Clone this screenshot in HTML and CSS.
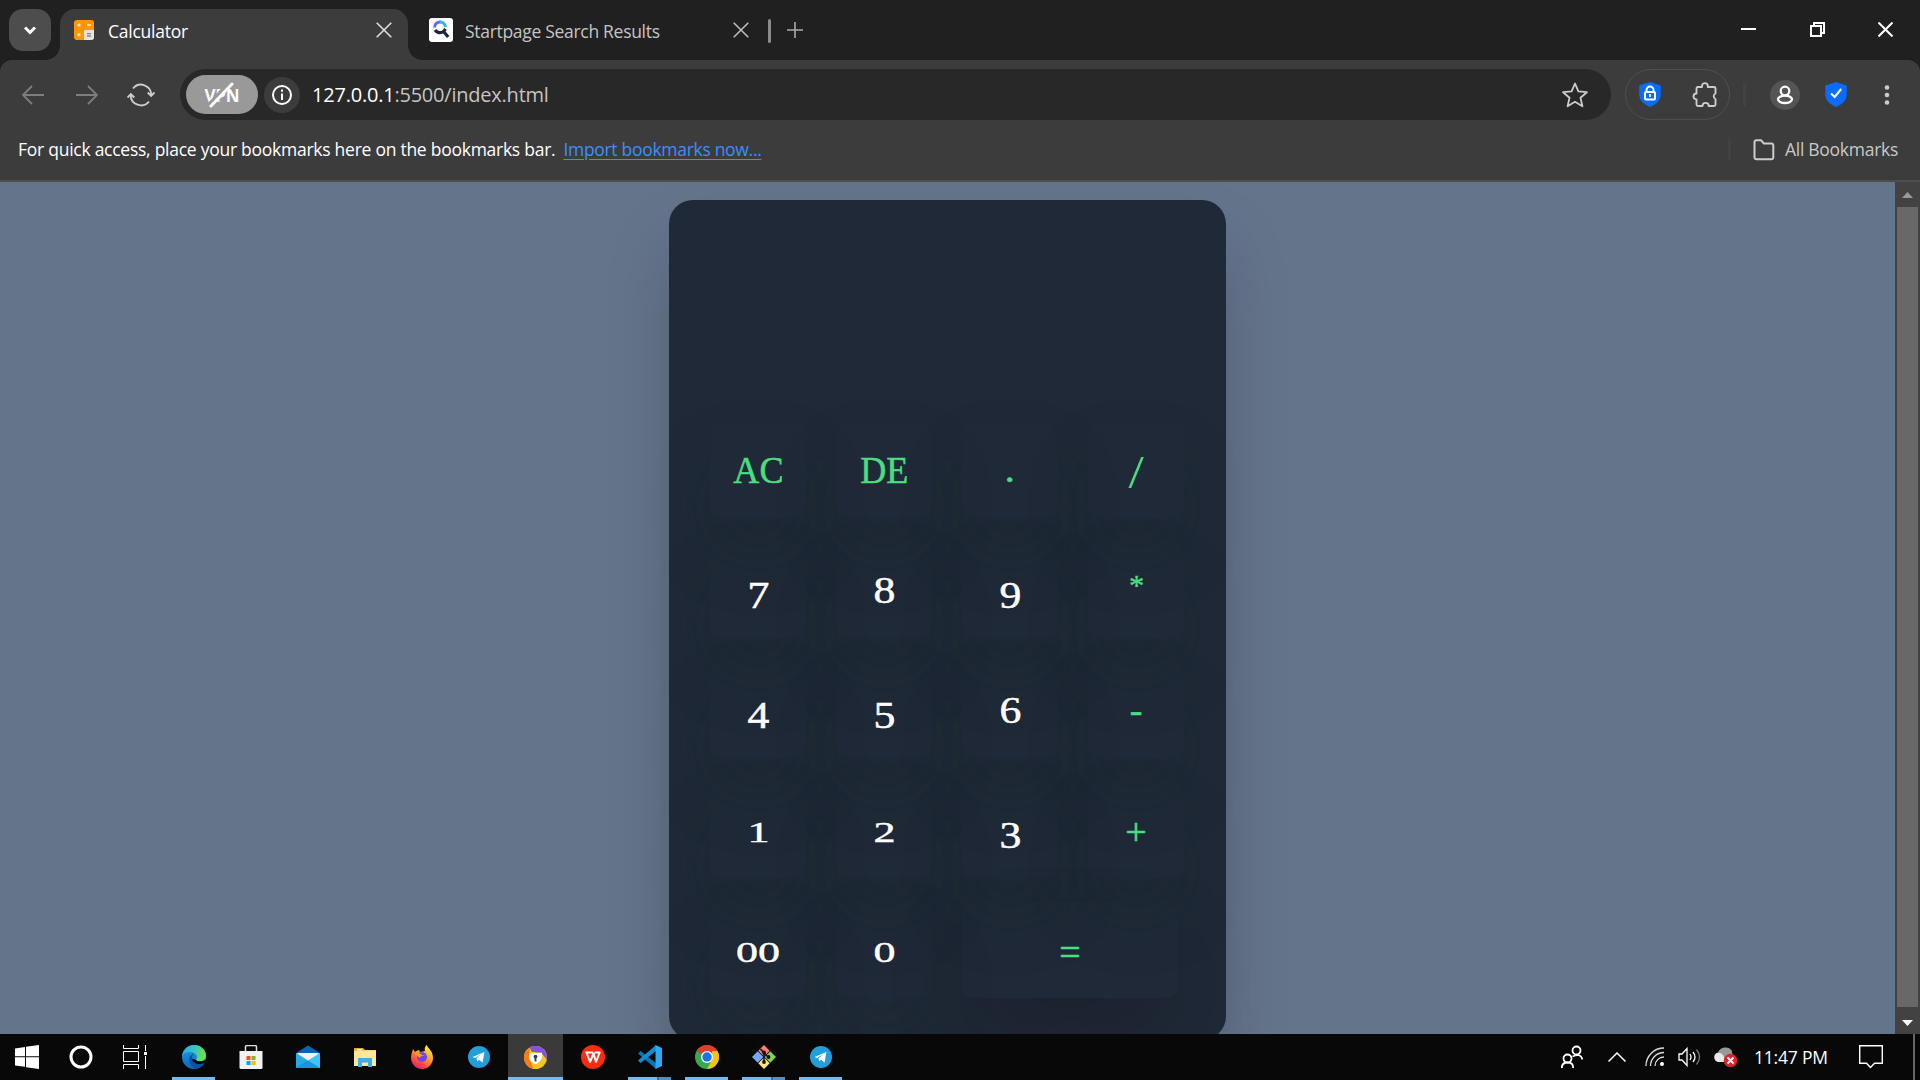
FILE: index.html
```
<!DOCTYPE html>
<html lang="en">
<head>
<meta charset="utf-8">
<title>Calculator</title>
<link rel="stylesheet" href="styles.css">
</head>
<body>
<header class="tabs">
  <button class="tab-menu"><svg width="42" height="42" viewBox="0 0 42 42"><path d="M16 18.500l5 5 5-5" class="s3"/></svg></button>
  <div class="tab active">
    <svg class="fav-calc" width="20" height="20" viewBox="0 0 20 20"><rect width="20" height="20" rx="3" fill="#ff9800"/><path d="M10 10h10v7a3 3 0 0 1-3 3h-7z" fill="#e4e4e4"/><path d="M10 0v10H0" fill="none" stroke="#e88800" stroke-width=".7"/><path d="M5 3.500v3M3.500 5h3M13 5h4M3.700 13.500l2.600 2.600M6.300 13.500l-2.600 2.600" stroke="#fff0d0" stroke-width="1.400"/><path d="M13 13.700h4M13 16h4" stroke="#888" stroke-width="1.300"/></svg>
    <span class="tab-title t-calc">Calculator</span>
    <svg class="close" width="16" height="16" viewBox="0 0 16 16"><path d="M.7.700l14.600 14.600M15.300.700L.7 15.300" stroke="#ddd" stroke-width="1.600"/></svg>
  </div>
  <div class="tab idle">
    <svg width="24" height="24" viewBox="0 0 24 24"><rect width="24" height="24" rx="3" fill="#fff"/><path d="M5.500 9.500A5.500 5.500 0 0 1 12 4" fill="none" stroke="#5a6cff" stroke-width="3"/><path d="M11 4a5.500 5.500 0 0 1 5.500 5" fill="none" stroke="#28b8dc" stroke-width="3"/><path d="M6 12a6 6 0 0 0 8.500 1.500l4.700 5.500M14.500 13.500l2-2.500" fill="none" stroke="#1c2445" stroke-width="3.200"/></svg>
    <span class="tab-title t-start">Startpage Search Results</span>
    <svg class="close" width="16" height="16" viewBox="0 0 16 16"><path d="M.7.700l14.600 14.600M15.300.700L.7 15.300" stroke="#bbb" stroke-width="1.600"/></svg>
  </div>
  <i class="tab-sep"></i>
  <svg class="plus" width="16" height="16" viewBox="0 0 16 16"><path d="M8 0v16M0 8h16" stroke="#aaa" stroke-width="1.600"/></svg>
  <div class="window-buttons">
    <svg width="15" height="15" viewBox="0 0 15 15"><path d="M0 7h15" stroke="#fff" stroke-width="2"/></svg>
    <svg width="15" height="15" viewBox="0 0 15 15"><path d="M1 4h10v10H1zM4 4V1h10v10h-3" fill="none" stroke="#fff" stroke-width="2"/></svg>
    <svg width="15" height="15" viewBox="0 0 15 15"><path d="M.5.500l14 14M14.500.500l-14 14" stroke="#fff" stroke-width="2"/></svg>
  </div>
</header>
<section class="chrome">
<div class="toolbar">
  <svg class="nav-icon" width="22" height="22" viewBox="0 0 22 22"><path d="M22 11H1M10 2L1 11l9 9" class="dim"/></svg>
  <svg class="nav-icon" width="22" height="22" viewBox="0 0 22 22"><path d="M0 11h21M12 2l9 9-9 9" class="dim"/></svg>
  <svg class="reload" width="28" height="26" viewBox="0 0 28 26"><path d="M6 6.500a10.300 10.300 0 0 1 18.300 6.500M22 19.500a10.300 10.300 0 0 1-18.300-6.500M.5 15.500l3.300-3.500 3.500 3.500M20.700 10.500l3.500 3.500 3.300-3.500" fill="none" stroke="#ccc" stroke-width="1.900"/></svg>
  <div class="address">
    <span class="vpn">VPN<svg width="26" height="26" viewBox="0 0 26 26"><path d="M2.500 22.500L22 1.500" stroke="#999" stroke-width="6"/><path d="M3 24L24 2" stroke="#fff" stroke-width="3" stroke-linecap="round"/></svg></span>
    <span class="info"><svg width="22" height="22" viewBox="0 0 22 22"><circle cx="11" cy="11" r="9" fill="none" stroke="#fff" stroke-width="2"/><path d="M11 9.500V16M11 5.500v2.300" stroke="#fff" stroke-width="2"/></svg></span>
    <span class="url"><b>127.0.0.1</b>:5500/index.html</span>
    <svg class="star" width="26" height="26" viewBox="0 0 26 26"><path d="M13 1.500l3.400 7.900 8.500.8-6.400 5.600 1.900 8.500L13 19.800l-7.400 4.500 1.900-8.500-6.400-5.600 8.500-.8z" fill="none" stroke="#ccc" stroke-width="1.800" stroke-linejoin="round"/></svg>
  </div>
  <div class="extensions">
    <svg width="22" height="25" viewBox="0 0 22 25"><path d="M11 0l10.700 3.500V12c0 6-4 10-10.700 13C4.300 22 .3 18 .3 12V3.500z" fill="#0a6cff"/><rect x="6" y="10" width="10" height="7.500" rx="1" fill="none" stroke="#fff" stroke-width="2"/><path d="M7.500 10V8a3.500 3.500 0 0 1 7 0v2M11 12v3" fill="none" stroke="#fff" stroke-width="1.900"/></svg>
    <svg width="26" height="26" viewBox="0 0 26 26"><path d="M5.500 5H10V4a2.900 2.900 0 0 1 5.800 0v1H22a1.500 1.500 0 0 1 1.500 1.500v5a3 3 0 0 0 0 5.500v5.500A1.500 1.500 0 0 1 22 24h-5.300a3.100 3.100 0 0 0-6.200 0H6A1.500 1.500 0 0 1 4.500 22.500v-5a3 3 0 0 1 0-6V6.500A1.500 1.500 0 0 1 5.500 5z" fill="none" stroke="#ccc" stroke-width="1.900" stroke-linejoin="round"/></svg>
  </div>
  <i class="sep"></i>
  <span class="avatar"><svg width="18" height="20" viewBox="0 0 18 20"><circle cx="9" cy="6" r="4.300" class="s2"/><ellipse cx="9" cy="14.300" rx="7" ry="3.700" class="s2"/></svg></span>
  <svg class="guard" width="22" height="25" viewBox="0 0 22 25"><path d="M11 0l10.700 3.500V12c0 6-4 10-10.700 13C4.300 22 .3 18 .3 12V3.500z" fill="#0a6cff"/><path d="M6 11.500l3.700 3.500 6.500-8" fill="none" stroke="#fff" stroke-width="2"/></svg>
  <svg class="dots" width="6" height="20" viewBox="0 0 6 20"><g fill="#ccc"><circle cx="3" cy="2.500" r="2.300"/><circle cx="3" cy="10" r="2.300"/><circle cx="3" cy="17.500" r="2.300"/></g></svg>
</div>
<div class="bookmarks">
  <span class="hint">For quick access, place your bookmarks here on the bookmarks bar.</span>
  <a class="import">Import bookmarks now...</a>
  <i class="sep bm-sep"></i>
  <svg width="22" height="22" viewBox="0 0 22 22"><path d="M1.500 3A1.800 1.800 0 0 1 3.300 1.200H8l2.800 3.300h7.700A1.800 1.800 0 0 1 20.300 6.300v12.200a1.800 1.800 0 0 1-1.800 1.800H3.300a1.800 1.800 0 0 1-1.800-1.800z" fill="none" stroke="#ccc" stroke-width="2"/></svg>
  <span class="all">All Bookmarks</span>
</div>
</section>
<main class="viewport">
  <div class="page">
    <div class="calculator">
      <div class="keys">
        <button class="key op"><span class="cap">AC</span></button><button class="key op"><span class="cap">DE</span></button><button class="key op"><span class="point">.</span></button><button class="key op"><span class="slash">/</span></button>
        <button class="key"><span class="low">7</span></button><button class="key"><span class="tall">8</span></button><button class="key"><span class="low">9</span></button><button class="key op"><span class="times">*</span></button>
        <button class="key"><span class="low">4</span></button><button class="key"><span class="low">5</span></button><button class="key"><span class="tall">6</span></button><button class="key op"><span class="minus">-</span></button>
        <button class="key"><span class="short">1</span></button><button class="key"><span class="short">2</span></button><button class="key"><span class="low">3</span></button><button class="key op"><span class="sym">+</span></button>
        <button class="key"><span class="short">00</span></button><button class="key"><span class="short">0</span></button><button class="key op equals"><span class="sym">=</span></button>
      </div>
    </div>
  </div>
  <div class="scrollbar">
    <svg width="25" height="25" viewBox="0 0 25 25"><path d="M7 16h11l-5.500-6z" fill="#999"/></svg>
    <div class="thumb"></div>
    <svg width="25" height="27" viewBox="0 0 25 27"><path d="M7 13h11l-5.500 6z" fill="#fff"/></svg>
  </div>
</main>
<footer class="taskbar">
  <div class="app start"><svg width="24" height="24" viewBox="0 0 24 24"><path d="M0 3.500l10-1.500v9.300H0zM11 1.800L24 0v11.300H11zM0 12.300h10v9.400L0 20.500zM11 12.300h13V24l-13-1.800z" fill="#fff"/></svg></div>
  <div class="app search"><svg width="24" height="24" viewBox="0 0 24 24"><circle cx="12" cy="12" r="10" fill="none" stroke="#fff" stroke-width="3"/></svg></div>
  <div class="app view"><svg width="24" height="24" viewBox="0 0 24 24"><path d="M.5 0v3.500h15V0M.5 6.500h15v10H.5zM.5 24v-4.500h15V24M22.500 0v6M22.500 11v13" fill="none" stroke="#fff"/><path d="M21 7h3v3h-3z" fill="#fff"/></svg></div>
  <div class="app running"><svg width="24" height="24" viewBox="0 0 24 24"><defs><linearGradient id="eg" x1="0" y1="0" x2="1" y2=".3"><stop offset="0" stop-color="#2ba8e8"/><stop offset=".5" stop-color="#35c1c8"/><stop offset="1" stop-color="#6be04c"/></linearGradient><linearGradient id="eb" x1="0" y1="0" x2="0" y2="1"><stop offset="0" stop-color="#1ba0e5"/><stop offset="1" stop-color="#0b66c4"/></linearGradient></defs><circle cx="12" cy="12" r="12" fill="url(#eb)"/><path d="M0 11C1 4.500 6 0 12 0c7 0 12 5 12 10.500 0 4-3 6-6.500 6-2.500 0-3.800-.8-3.500-1.700 1.600-1.800 1.200-5.300-2-6.800C8 6 2 7 0 11z" fill="url(#eg)"/><path d="M12 8c-5 2-6 8-3 12 2 3 5 4 7 3.300 3-.8 5-2.800 6.500-5-5 2-12 0-12.500-5 0-2 .8-3.800 2-5.300z" fill="#10509c"/><path d="M10 13.500c.5 5 7 7 12.500 4.500 1.500-1 1.200-2 .5-3-2 1.500-8 2-9 0z" fill="#080808"/></svg></div>
  <div class="app"><svg width="24" height="24" viewBox="0 0 24 24"><path d="M6.500 7V2a1.500 1.500 0 0 1 1.500-1.500h8A1.500 1.500 0 0 1 17.500 2v5" fill="none" stroke="#ddd" stroke-width="1.500"/><path d="M.5 6h23v16.500a1.500 1.500 0 0 1-1.500 1.500H2a1.500 1.500 0 0 1-1.500-1.500z" fill="#f1f1f1"/><path d="M7.500 11h4v4h-4z" fill="#f25022"/><path d="M12.500 11h4v4h-4z" fill="#7fba00"/><path d="M7.500 16h4v4h-4z" fill="#00a4ef"/><path d="M12.500 16h4v4h-4z" fill="#ffb900"/></svg></div>
  <div class="app"><svg width="24" height="24" viewBox="0 0 24 24"><path d="M0 8l12-7.500L24 8v8H0z" fill="#0a63b8"/><path d="M1.500 8h21v8h-21z" fill="#f2f2f2"/><path d="M0 8l12 7.500L0 23z" fill="#28a8ea"/><path d="M24 8L0 23h24z" fill="#3cc4f8"/><path d="M12 15.500L24 23H0z" fill="#1c94dc"/></svg></div>
  <div class="app"><svg width="24" height="24" viewBox="0 0 24 24"><path d="M1 3h8l3 2h11v16H1z" fill="#fbd66d"/><path d="M1 6h22v15H1z" fill="#ffe794"/><path d="M1 3h9l2 2.500H1z" fill="#e8a92c"/><path d="M4 4h5v1.500H4z" fill="#fff"/><path d="M5 22v-9h14v9h-4v-4.500H9V22z" fill="#38b0ea"/></svg></div>
  <div class="app"><svg width="24" height="24" viewBox="0 0 24 24"><defs><linearGradient id="ff" x1=".8" y1="0" x2=".2" y2="1"><stop offset="0" stop-color="#fff44f"/><stop offset=".45" stop-color="#ff9a23"/><stop offset=".8" stop-color="#ff3750"/><stop offset="1" stop-color="#e31587"/></linearGradient></defs><path d="M3 4l2 3c1-1 3-2 4-2l1 2 5-1c-1-2 0-5 2-6 0 3 6 5 6 13a11 11 0 0 1-22 0c0-3 1-6 2-9z" fill="url(#ff)"/><circle cx="12" cy="12" r="5" fill="#7542e5"/><path d="M5 9c3-1 5-1 7 1l3 0c-2 1-5 1-5 3" fill="#ff9a23"/></svg></div>
  <div class="app"><svg width="22" height="22" viewBox="0 0 22 22"><circle cx="11" cy="11" r="11" fill="#229ed9"/><path d="M4.500 11L16.500 6l-2 10.500-3.700-2.700-1.600 1.700-.7-3.300 4.800-4.200-6 3.900z" fill="#fff"/></svg></div>
  <div class="app current"><svg width="23" height="23" viewBox="0 0 24 24"><circle cx="12" cy="12" r="12" fill="#f5c520"/><path d="M6 1.600A12 12 0 0 1 23.700 14L18 7 8 6z" fill="#8150f0"/><path d="M6 1.600A12 12 0 0 0 10 23.800L5 12z" fill="#ff7a18"/><path d="M6 7.500c4 0 8 0 12.500-.5 1.500 5-1 10-6.500 12-5-2-8-6-6-11.500z" fill="#fff"/><circle cx="12" cy="11" r="2" fill="#333b52"/><path d="M11 12h2v4h-2z" fill="#333b52"/></svg></div>
  <div class="app"><svg width="24" height="24" viewBox="0 0 24 24"><circle cx="12" cy="12" r="12" fill="#fb2c0d"/><path d="M4.500 7.500H12M5.500 7.500L9 17l3.500-8.500L15 17l3.700-9.500h-5.200" fill="none" stroke="#fff" stroke-width="2" stroke-linejoin="round"/></svg></div>
  <div class="app stacked"><svg width="24" height="24" viewBox="0 0 24 24"><path d="M2.500 6L18 18v6L0 8.500z" fill="#0872b9"/><path d="M2.500 18L18 6V0L0 15.500z" fill="#148bd4"/><path d="M17.500 0L24 3v18l-6.500 3z" fill="#2aa9f4"/></svg></div>
  <div class="app running"><svg width="24" height="24" viewBox="0 0 24 24"><circle cx="12" cy="12" r="12" fill="#34a853"/><path d="M12 12L1.600 6A12 12 0 0 1 22.400 6z" fill="#e33b2e"/><path d="M22.400 6A12 12 0 0 1 12 24l5-9V6z" fill="#fbc116"/><circle cx="12" cy="12" r="6" fill="#fff"/><circle cx="12" cy="12" r="4.700" fill="#1a73e8"/></svg></div>
  <div class="app stacked"><svg width="24" height="24" viewBox="0 0 24 24"><path d="M12 0l5.700 5.700-5.700 5.700-5.700-5.700z" fill="#ff7b7b"/><path d="M18.300 6.300L24 12l-5.700 5.700-5.700-5.700z" fill="#80d060"/><path d="M12 12.600l5.700 5.700L12 24l-5.700-5.700z" fill="#ffe57c"/><path d="M5.700 6.300l5.700 5.700-5.700 5.700L0 12z" fill="#78a9f5"/><path d="M8.500 4l3.500 4v9M12 8l4 4" fill="none" stroke="#151515" stroke-width="1.600"/><g fill="#151515"><circle cx="12" cy="7.500" r="1.900"/><circle cx="16.500" cy="12" r="1.900"/><circle cx="12" cy="17" r="1.900"/></g></svg></div>
  <div class="app running"><svg width="22" height="22" viewBox="0 0 22 22"><circle cx="11" cy="11" r="11" fill="#229ed9"/><path d="M4.500 11L16.500 6l-2 10.500-3.700-2.700-1.600 1.700-.7-3.300 4.800-4.200-6 3.900z" fill="#fff"/></svg></div>
  <div class="tray">
    <svg width="22" height="24" viewBox="0 0 22 24" class="people"><circle cx="15.500" cy="5.500" r="4"/><path d="M11.500 11.500q8-4 10 3"/><circle cx="6.500" cy="13.500" r="4"/><path d="M.8 23q0-5.500 5.700-5.500t5.700 5.500"/></svg>
    <svg width="18" height="10" viewBox="0 0 18 10" class="chev"><path d="M.5 9.500L9 1l8.500 8.500" fill="none" stroke="#fff" stroke-width="1.500"/></svg>
    <svg width="20" height="20" viewBox="0 0 20 20" class="wifi"><g fill="none" stroke="#ddd" stroke-width="1.300"><path d="M1 19A18 18 0 0 1 19 1"/><path d="M5.500 19A13.500 13.500 0 0 1 19 5.500"/><path d="M10 19a9 9 0 0 1 9-9"/></g><circle cx="17" cy="17" r="2" fill="#fff"/></svg>
    <svg width="23" height="20" viewBox="0 0 23 20" class="sound"><path d="M1 7h3l5-5.500v17L4 13H1zM12 7q2 3 0 6M15 5q4 5 0 10" fill="none" stroke="#fff" stroke-width="1.300"/><path d="M18.500 2.500q6 7.500 0 15" fill="none" stroke="#777" stroke-width="1.300"/></svg>
    <svg width="26" height="22" viewBox="0 0 26 22" class="cloud"><path d="M5 16a5 5 0 0 1 0-9.500A8 8 0 0 1 19 5l1 10z" fill="#999"/><path d="M5 16a4.800 4.800 0 0 1-1-9q6-2 9 9z" fill="#e8e8e8"/><circle cx="17.500" cy="14.500" r="6.800" fill="#d9252c"/><path d="M14.500 11.500l6 6M20.500 11.500l-6 6" stroke="#fff" stroke-width="1.800"/></svg>
    <span class="clock">11:47 PM</span>
    <svg width="24" height="24" viewBox="0 0 24 24" class="note"><path d="M.7.700h22.600v17.600H15.500L11.500 22.500 7.500 18.300H.7z" fill="none" stroke="#fff" stroke-width="1.400"/></svg>
    <i class="desktop"></i>
  </div>
</footer>
</body>
</html>
```
FILE: styles.css
```
* { box-sizing: border-box; }
body { margin: 0; width: 1920px; height: 1080px; overflow: hidden; display: flex; flex-direction: column; background: #202020; font-family: "Open Sans", "Noto Sans", sans-serif; font-size: 17.5px; color: #fff; }
svg { display: block; flex: none; }
button { border: 0; padding: 0; color: inherit; font: inherit; }
.s3 { fill: none; stroke: #fff; stroke-width: 3; }
.s2 { fill: none; stroke: #fff; stroke-width: 2.3; }
.dim { fill: none; stroke: #7d7d7d; stroke-width: 1.8; }

.tabs { height: 60px; flex: none; display: flex; align-items: flex-start; padding: 9px 27px 0 9px; }
.tab-menu { width: 42px; height: 42px; border-radius: 14px; background: #4d4d4d; }
.tab { display: flex; align-items: center; white-space: nowrap; }
.tab.active { position: relative; width: 348px; height: 51px; margin-left: 9px; padding: 0 16px 9px 14px; background: #3c3c3c; border-radius: 15px 15px 0 0; }
.tab.active::before, .tab.active::after { content: ""; position: absolute; bottom: 0; width: 14px; height: 14px; }
.tab.active::before { left: -14px; background: radial-gradient(circle at 0 0, transparent 13.5px, #3c3c3c 14px); }
.tab.active::after { right: -14px; background: radial-gradient(circle at 100% 0, transparent 13.5px, #3c3c3c 14px); }
.tab-title { margin-left: 14px; line-height: 24px; padding-top: 1px; }
.t-calc { letter-spacing: -.25px; }
.t-start { margin-left: 12px; color: #c4c4c4; letter-spacing: -.3px; }
.close { margin-left: auto; }
.tab.idle { width: 320px; height: 42px; margin-left: 21px; }
.tab-sep { width: 3px; height: 24px; margin: 10px 0 0 19px; border-radius: 2px; background: #8c8c8c; }
.plus { margin: 13px 0 0 16px; }
.window-buttons { display: flex; gap: 53.5px; margin: 13px 0 0 auto; }

.chrome { height: 122px; flex: none; background: #3c3c3c; border-radius: 12px 12px 0 0; border-bottom: 2px solid #4e4e4e; }
.toolbar { height: 69px; display: flex; align-items: center; padding: 0 30px 0 22px; }
.nav-icon { margin-right: 32px; }
.reload { margin: 0 25px 0 -3px; }
.address { width: 1431px; height: 51px; border-radius: 26px; background: #282828; display: flex; align-items: center; padding: 0 23px 0 6px; }
.vpn { position: relative; width: 72px; height: 39px; border-radius: 20px; background: #999; display: flex; align-items: center; justify-content: center; font-size: 17px; font-weight: 700; letter-spacing: -.2px; padding-top: 2px; }
.vpn svg { position: absolute; left: 22px; top: 7px; }
.info { width: 36px; height: 36px; margin-left: 6px; border-radius: 50%; background: #3c3c3c; display: grid; place-items: center; }
.url { margin-left: 12px; font-size: 20px; letter-spacing: -.22px; color: #c4c4c4; white-space: nowrap; }
.url b { color: #fff; font-weight: 400; }
.star { margin-left: auto; }
.extensions { width: 105px; height: 51px; margin-left: 14px; border: 1.5px solid #505050; border-radius: 26px; display: flex; align-items: center; justify-content: space-between; padding: 0 11px 0 13px; }
.sep { width: 3px; height: 23px; background: #424242; margin-left: 13px; }
.avatar { width: 30px; height: 30px; margin-left: 24px; border-radius: 50%; background: #555; display: grid; place-items: center; }
.guard { margin-left: 25px; }
.dots { margin-left: auto; }
.bookmarks { height: 43px; display: flex; align-items: center; padding: 0 22px 4px 18px; white-space: nowrap; }
.hint { letter-spacing: -.26px; }
.import { margin-left: 8px; color: #3f8cff; letter-spacing: -.3px; text-decoration: underline; text-underline-offset: 3px; }
.bm-sep { margin: 0 22px 0 auto; }
.bookmarks svg { margin-top: 2px; }
.all { margin-left: 10px; color: #c8c8c8; letter-spacing: -.28px; }

.viewport { height: 852px; flex: none; display: flex; background: #64748b; }
.page { width: 1895px; height: 852px; overflow: hidden; padding: 18px 0 0 669px; }
.calculator { width: 557px; height: 840px; padding: 222px 0 0 41px; border-radius: 24px; background: #1f2937; box-shadow: 0 37px 75px -15px rgba(0,0,0,.25); }
.keys { display: grid; grid-template-columns: repeat(4, 96px); gap: 24px 30px; }
.key { height: 96px; border-radius: 12px; background: transparent; display: flex; align-items: center; justify-content: center; font-family: "Liberation Serif", serif; font-size: 38px; line-height: 1; -webkit-text-stroke: .5px currentColor; box-shadow: 0 37px 75px -18px rgba(25,45,35,.35); }
.op { color: #4ade80; }
.key span { display: block; }
.key .cap { transform: translateY(-.5px) scaleX(.95); }
.key .point { transform: translateY(-1px) scale(1.1, 1); }
.key .slash { transform: translateY(2px) scale(1.45, 1.2); -webkit-text-stroke-width: 0; }
.key .times { transform: translateY(-5px) scale(.8); }
.key .tall { transform: translateY(-.5px) scaleX(1.15); }
.key .low { transform: translateY(5px) scaleX(1.15); }
.key .short { transform: translateY(2px) scale(1.16, .78); }
.key .sym { transform: translateY(2px); }
.key .minus { transform: translateY(0); }
.equals { width: 216px; grid-column: span 2; box-shadow: 0 37px 75px -18px rgba(25,20,30,.5); }
.scrollbar { width: 25px; background: #424242; display: flex; flex-direction: column; }
.thumb { height: 800px; margin: 0 2px; background: #686868; }

.taskbar { height: 46px; flex: none; display: flex; background: #080808; }
.app { width: 43px; height: 46px; margin-right: 14px; display: grid; place-items: center; flex: none; }
.start { width: 54px; margin: 0; }
.search { width: 54px; margin: 0; }
.view { width: 54px; margin: 0 10px 0 0; }
.running { box-shadow: inset 0 -3px #76b9ed; }
.stacked { background: linear-gradient(90deg, #76b9ed 29px, #426b90 29px, #426b90 31px, #5a8db8 31px) left bottom / 43px 3px no-repeat; }
.current { width: 55px; margin: 0 8px 0 -6px; background: #3a3a3a; box-shadow: inset 0 -3px #76b9ed; }
.tray { display: flex; align-items: center; margin-left: auto; }
.people { fill: none; stroke: #fff; stroke-width: 1.8; margin-right: 25px; }
.chev { margin-right: 19px; }
.wifi { margin-right: 13px; }
.sound { margin-right: 12px; }
.clock { margin-left: 15px; width: 76px; letter-spacing: -.2px; white-space: nowrap; }
.note { margin-left: 29px; }
.desktop { width: 2px; height: 46px; margin: 0 5px 0 30px; background: #666; }
```
